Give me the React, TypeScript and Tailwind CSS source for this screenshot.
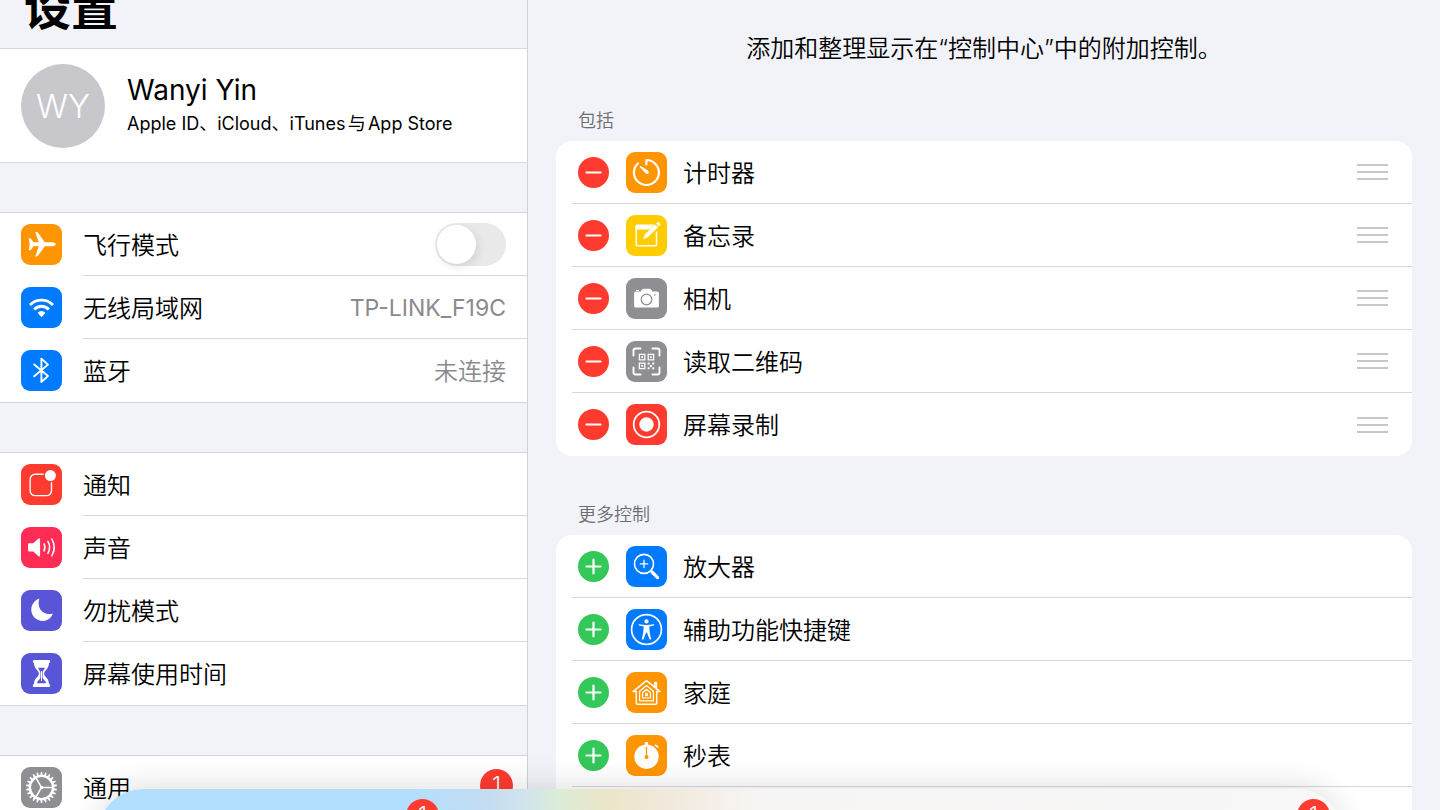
import type { ReactNode } from "react";

const GEAR_TEETH = Array.from({ length: 22 }, (_, i) => (i * 360) / 22);

function Glyph({ children }: { children: ReactNode }) {
  return (
    <svg viewBox="0 0 41 41" className="size-full" fill="none" aria-hidden="true">
      {children}
    </svg>
  );
}

const round = { strokeLinecap: "round", strokeLinejoin: "round" } as const;

const Airplane = () => (
  <Glyph>
    <path
      fill="#fff"
      d="M34.8 20.2c0 1.2-2.2 2-4 2h-7l-6.8 9.5c-.4.5-.8.8-1.4.8h-1.4l3.6-10.3h-5.3l-2.5 3.5c-.2.3-.5.5-.9.5H7.7l1-6-1-6h1.4c.4 0 .7.2.9.5l2.5 3.5h5.3L14.2 7.9h1.4c.6 0 1 .3 1.4.8l6.8 9.5h7c1.8 0 4 .8 4 2z"
    />
  </Glyph>
);

const Wifi = () => (
  <Glyph>
    <path stroke="#fff" strokeWidth="2.9" d="M9 17.9a16.2 16.2 0 0 1 23 0M13.2 22.4a10.2 10.2 0 0 1 14.6 0" />
    <path fill="#fff" d="M16.6 25.7a5.6 5.6 0 0 1 7.8 0l-3.1 3.7c-.5.5-1.1.5-1.6 0z" />
  </Glyph>
);

const Bluetooth = () => (
  <Glyph>
    <path stroke="#fff" strokeWidth="1.9" {...round} d="M13.2 14.4 27 26l-6.6 6V8.6l6.6 6-13.8 11.7" />
  </Glyph>
);

const Notifications = () => (
  <Glyph>
    <rect x="9.1" y="10.2" width="21.4" height="21.4" rx="5" stroke="#fff" strokeWidth="1.4" />
    <circle cx="29.4" cy="11.6" r="7" fill="#ff3b30" />
    <circle cx="29.4" cy="11.6" r="5.5" fill="#fff" />
  </Glyph>
);

const Sound = () => (
  <Glyph>
    <path
      fill="#fff"
      d="M8.5 16.2h3.7l5.4-4.6c.7-.6 1.5-.2 1.5.7v16.2c0 .9-.8 1.3-1.5.7l-5.4-4.6H8.5c-.9 0-1.4-.5-1.4-1.4v-5.6c0-.9.5-1.4 1.4-1.4z"
    />
    <path stroke="#fff" strokeWidth="1.5" {...round} d="M23 16.9c1.2 2.2 1.2 4.8 0 7M26.9 14.4c2.1 3.7 2.1 8.3 0 12M30.8 12c3 5.2 3 11.6 0 16.8" />
  </Glyph>
);

const Moon = () => (
  <Glyph>
    <path fill="#fff" d="M18.3 8.6c-5.3 2-8 6.6-8 11.2C10.3 26.2 15.4 31 21.6 31c4.7 0 8.7-2.9 10.2-7.5-8.6 2.6-16.6-4.2-13.5-14.9z" />
  </Glyph>
);

const Hourglass = () => (
  <Glyph>
    <path
      fill="#fff"
      d="M13.2 7h14.6c1.8 0 1.8 2.7.2 3-.2 5-3.3 7.3-4.2 8.5-.9 1.2-.9 3 0 4.2.9 1.2 4 3.5 4.2 8.2 1.6.3 1.6 3-.2 3H13.2c-1.8 0-1.8-2.7-.2-3 .2-4.7 3.3-7 4.2-8.2.9-1.2.9-3 0-4.2-.9-1.2-4-3.5-4.2-8.5-1.6-.3-1.6-3 .2-3z"
    />
    <path fill="#5856d6" d="M17 14.8h7c-.8 2-2.3 3-2.4 5v5c.2 1.6 2.5 2.7 3.2 4.2.3.8 0 1.3-.8 1.3h-7c-.8 0-1.1-.5-.8-1.3.7-1.5 3-2.6 3.2-4.2v-5c-.1-2-1.6-3-2.4-5z" />
    <path fill="#fff" d="M20 18h1v10h-1z" />
  </Glyph>
);

const Gear = () => (
  <Glyph>
    <circle cx="20.5" cy="20.5" r="11.6" stroke="#fff" strokeWidth="2.4" />
    {GEAR_TEETH.map((a) => (
      <path key={a} fill="#fff" d="M19.3 8.6 19.8 5h1.4l.5 3.6z" transform={`rotate(${a} 20.5 20.5)`} />
    ))}
    <path stroke="#fff" strokeWidth="1.5" d="M20.5 20.5h11.5M20.5 20.5l-5.8-10M20.5 20.5l-5.8 10" />
    <circle cx="20.5" cy="20.5" r="1.7" fill="#fff" />
  </Glyph>
);

const Timer = () => (
  <Glyph>
    <path stroke="#fff" strokeWidth="2.2" {...round} d="M20.4 12.5V8c6.8 0 12.5 5.6 12.5 12.5S27.3 33 20.4 33 7.9 27.4 7.9 20.5c0-3.7 1.5-6.7 4.1-9" />
    <path fill="#fff" d="M13.9 14.2c.3-.3.7-.3 1-.1l6.9 4.3c2.2 1.6.3 4.7-2 3-.3-.2-.5-.5-.7-.7L13.8 15.2c-.2-.3-.2-.7.1-1z" />
  </Glyph>
);

const Memo = () => (
  <Glyph>
    <path fill="#fff" d="M11 9.5h17.5l-4.7 5H9.5V11c0-.9.6-1.5 1.5-1.5z" />
    <path stroke="#fff" strokeWidth="1.5" d="M10.3 12v17.6c0 .8.4 1.2 1.2 1.2h17.8c.8 0 1.2-.4 1.2-1.2V16.5" />
    <path fill="#fff" d="m17 24.2 1.7-4.6 10.6-10.1 2.7 2.8-10.6 10.1zM30.2 8.6l1.2-1.1c.6-.6 1.3-.5 1.9.1l.7.8c.6.6.6 1.3 0 1.9l-1.2 1.1z" />
  </Glyph>
);

const Camera = () => (
  <Glyph>
    <path
      fill="#fff"
      d="M10 13.6h4.6l1.7-2.3c.3-.4.7-.6 1.2-.6h6c.5 0 .9.2 1.2.6l1.7 2.3H31c1.2 0 1.9.7 1.9 1.9v12.2c0 1.2-.7 1.9-1.9 1.9H10c-1.2 0-1.9-.7-1.9-1.9V15.5c0-1.2.7-1.9 1.9-1.9z"
    />
    <path fill="#fff" d="M10 12h3v1h-3z" />
    <circle cx="20.5" cy="21.5" r="5.3" stroke="#8e8e93" strokeWidth="1.2" />
    <circle cx="28.8" cy="17" r=".8" fill="#8e8e93" />
  </Glyph>
);

const QrCode = () => (
  <Glyph>
    <path stroke="#fff" strokeWidth="1.9" {...round} d="M7.5 14.5V9.5c0-1.3.6-2 2-2h5M26.5 7.5h5c1.4 0 2 .7 2 2v5M33.5 26.5v5c0 1.3-.6 2-2 2h-5M14.5 33.5h-5c-1.4 0-2-.7-2-2v-5" />
    <path stroke="#fff" strokeWidth="1.3" d="M13.4 13.4h5.4v5.4h-5.4zM22.2 13.4h5.4v5.4h-5.4zM13.4 22.2h5.4v5.4h-5.4z" />
    <path
      fill="#fff"
      d="M15.2 15.2H17V17h-1.8zM24 15.2h1.8V17H24zM15.2 24H17v1.8h-1.8zM21.6 21.6h2v2h-2zM26.2 21.6h2v2h-2zM23.9 23.9h2v2h-2zM21.6 26.2h2v2h-2zM26.2 26.2h2v2h-2z"
    />
  </Glyph>
);

const Record = () => (
  <Glyph>
    <circle cx="20.5" cy="20.5" r="12.8" stroke="#fff" strokeWidth="1.8" />
    <circle cx="20.5" cy="20.5" r="7.2" fill="#fff" />
  </Glyph>
);

const Magnifier = () => (
  <Glyph>
    <circle cx="18" cy="17.9" r="9.5" stroke="#fff" strokeWidth="1.6" />
    <path stroke="#fff" strokeWidth="1.3" strokeLinecap="round" d="M14.3 17.9h7.4M18 14.2v7.4" />
    <path stroke="#fff" strokeWidth="3.2" strokeLinecap="round" d="m26 26 5.6 5.6" />
    <path stroke="#fff" strokeWidth="1.6" d="m24.5 24.5 2 2" />
  </Glyph>
);

const Accessibility = () => (
  <Glyph>
    <circle cx="20.5" cy="20.5" r="14.9" stroke="#fff" strokeWidth="1.7" />
    <circle cx="20.5" cy="12.4" r="2.1" fill="#fff" />
    <path
      fill="#fff"
      d="M13.4 15.2c2.4.5 4.8.8 7.1.8s4.7-.3 7.1-.8c.9-.1 1.1 1.1.2 1.3-1.5.4-3 .7-4.4.9.1 4.3.3 6.5 1.7 12.2.2 1.1-1.3 1.6-1.7.5l-2.5-6.7h-.8l-2.5 6.7c-.4 1.1-1.9.6-1.7-.5 1.4-5.7 1.6-7.9 1.7-12.2-1.4-.2-2.9-.5-4.4-.9-.9-.2-.7-1.4.2-1.3z"
    />
  </Glyph>
);

const Home = () => (
  <Glyph>
    <path stroke="#fff" strokeWidth="1.5" {...round} d="M7 19.6 20.5 8.7 34 19.6h-3.3v11.6c0 .7-.3 1-1 1H11.3c-.7 0-1-.3-1-1V19.6zM28.7 14.5v-4h1.7v5.3" />
    <path stroke="#fff" strokeWidth="1.3" {...round} d="M13.6 28.8v-9.6l6.9-5.6 6.9 5.6v9.6z" />
    <path stroke="#fff" strokeWidth="1.2" {...round} d="M16.6 26v-5.5l3.9-3.1 3.9 3.1V26z" />
    <path fill="#fff" d="M19 24.2v-2.8l1.5-1.2 1.5 1.2v2.8z" />
  </Glyph>
);

const Stopwatch = () => (
  <Glyph>
    <circle cx="20.5" cy="21.7" r="12.2" fill="#fff" />
    <path fill="#fff" d="M18.9 7h3.2v4h-3.2zM29.3 9.3l3.4 2.3-.8 1.5-3.2-2.3z" />
    <path stroke="#ff9500" strokeWidth="1.3" strokeLinecap="round" d="M20.5 12.3v9.4" />
    <circle cx="20.5" cy="21.9" r="2" fill="#ff9500" />
  </Glyph>
);

type Item = { label: string; icon: ReactNode; color: string };

const included: Item[] = [
  { label: "计时器", icon: <Timer />, color: "bg-[#ff9500]" },
  { label: "备忘录", icon: <Memo />, color: "bg-[#ffcc00]" },
  { label: "相机", icon: <Camera />, color: "bg-[#8e8e93]" },
  { label: "读取二维码", icon: <QrCode />, color: "bg-[#8e8e93]" },
  { label: "屏幕录制", icon: <Record />, color: "bg-[#ff3b30]" },
];

const more: Item[] = [
  { label: "放大器", icon: <Magnifier />, color: "bg-[#007aff]" },
  { label: "辅助功能快捷键", icon: <Accessibility />, color: "bg-[#007aff]" },
  { label: "家庭", icon: <Home />, color: "bg-[#ff9500]" },
  { label: "秒表", icon: <Stopwatch />, color: "bg-[#ff9500]" },
];

function Tile({ color, children }: { color: string; children: ReactNode }) {
  return <span className={`block size-[41px] shrink-0 overflow-hidden rounded-[9px] ${color}`}>{children}</span>;
}

function Badge() {
  return (
    <span className="flex size-[33px] items-center justify-center rounded-full bg-[#ff3b30] text-[23px] leading-none text-white">
      1
    </span>
  );
}

function Group({ children }: { children: ReactNode }) {
  return <ul className="mt-[49px] border-y border-[#d3d3d8] bg-white">{children}</ul>;
}

function SettingRow({ label, icon, color, children }: Item & { children?: ReactNode }) {
  return (
    <li className="group flex h-[63px] items-center gap-[21px] pl-[21px]">
      <Tile color={color}>{icon}</Tile>
      <div className="flex h-full flex-1 items-center justify-between border-b border-[#d8d8dc] pr-[21px] group-last:border-b-0">
        {label === "飞行模式" ? (
          <label htmlFor="airplane" className="pt-[3px]">
            {label}
          </label>
        ) : (
          <a href="#" className="pt-[3px]">
            {label}
          </a>
        )}
        {children}
      </div>
    </li>
  );
}

function ControlRow({ item, kind }: { item: Item; kind: "remove" | "add" }) {
  const removing = kind === "remove";
  return (
    <li
      className={`ml-4 flex h-[63px] items-center border-b border-[#d8d8dc] pr-6 pl-[6px] ${removing ? "last:border-b-0" : ""}`}
    >
      <button
        type="button"
        aria-label={`${removing ? "移除" : "添加"}${item.label}`}
        className={`mr-[17px] size-[31px] shrink-0 rounded-full ${removing ? "bg-[#ff3b30]" : "bg-[#34c759]"}`}
      >
        <svg viewBox="0 0 31 31" className="size-full" stroke="#fff" strokeWidth="2.2" strokeLinecap="round" aria-hidden="true">
          <path d={removing ? "M8.5 15.5h14" : "M8.5 15.5h14M15.5 8.5v14"} />
        </svg>
      </button>
      <Tile color={item.color}>{item.icon}</Tile>
      <span className="ml-4 flex-1 pt-[3px]">{item.label}</span>
      {removing && (
        <button type="button" aria-label={`移动${item.label}`} className="flex w-[31px] flex-col gap-[5px]">
          <span className="h-[2px] bg-[#c8c8cb]" />
          <span className="h-[2px] bg-[#c8c8cb]" />
          <span className="h-[2px] bg-[#c8c8cb]" />
        </button>
      )}
    </li>
  );
}

export default function App() {
  return (
    <div
      lang="zh-CN"
      className="relative flex h-screen overflow-hidden bg-[#f2f3f8] font-[Inter,'Noto_Sans_CJK_SC',sans-serif] text-2xl font-[350] text-black"
    >
      <aside className="w-[528px] shrink-0 overflow-hidden border-r border-[#d0d0d6]">
        <header className="flex h-12 items-end pb-[14px] pl-6">
          <h1 className="text-[47px] leading-[52px] font-bold">设置</h1>
        </header>
        <a href="#" className="flex items-center gap-[22px] border-y border-[#d8d8dc] bg-white pt-[15px] pb-[14px] pl-[21px]">
          <span className="flex size-[84px] items-center justify-center rounded-full bg-[#c7c7cc] text-[33px] text-white">
            WY
          </span>
          <span className="flex flex-col gap-1 font-normal">
            <span className="text-[28px] leading-8">Wanyi Yin</span>
            <span className="text-lg leading-7 [text-autospace:normal]">Apple ID、iCloud、iTunes与App Store</span>
          </span>
        </a>

        <Group>
          <SettingRow label="飞行模式" icon={<Airplane />} color="bg-[#ff9500]">
            <input
              id="airplane"
              type="checkbox"
              role="switch"
              className="flex h-[43px] w-[71px] appearance-none items-center rounded-full bg-[#e9e9ea] p-[2px] before:size-[39px] before:rounded-full before:bg-white before:shadow-[2px_3px_8px_rgba(0,0,0,0.1)] checked:justify-end checked:bg-[#34c759]"
            />
          </SettingRow>
          <SettingRow label="无线局域网" icon={<Wifi />} color="bg-[#007aff]">
            <span className="pt-[3px] text-[23px] font-normal text-[#8a8a8e]">TP-LINK_F19C</span>
          </SettingRow>
          <SettingRow label="蓝牙" icon={<Bluetooth />} color="bg-[#007aff]">
            <span className="pt-[3px] text-[#8a8a8e]">未连接</span>
          </SettingRow>
        </Group>

        <Group>
          <SettingRow label="通知" icon={<Notifications />} color="bg-[#ff3b30]" />
          <SettingRow label="声音" icon={<Sound />} color="bg-[#ff2d55]" />
          <SettingRow label="勿扰模式" icon={<Moon />} color="bg-[#5856d6]" />
          <SettingRow label="屏幕使用时间" icon={<Hourglass />} color="bg-[#5856d6]" />
        </Group>

        <Group>
          <SettingRow label="通用" icon={<Gear />} color="bg-[#8e8e93]">
            <span className="-mr-[7px] pb-1">
              <Badge />
            </span>
          </SettingRow>
        </Group>
      </aside>

      <main className="min-w-0 flex-1 overflow-hidden px-7 pt-[33px]">
        <p className="text-center leading-8">添加和整理显示在“控制中心”中的附加控制。</p>
        <h2 className="mt-11 px-[22px] text-lg leading-6 text-[#6d6d72]">包括</h2>
        <ul className="mt-2 overflow-hidden rounded-2xl bg-white">
          {included.map((item) => (
            <ControlRow key={item.label} item={item} kind="remove" />
          ))}
        </ul>
        <h2 className="mt-[47px] px-[22px] text-lg leading-6 text-[#6d6d72]">更多控制</h2>
        <ul className="mt-2 overflow-hidden rounded-2xl bg-white pb-16">
          {more.map((item) => (
            <ControlRow key={item.label} item={item} kind="add" />
          ))}
        </ul>
      </main>

      <nav
        aria-label="程序坞"
        className="absolute inset-x-[98px] -bottom-[90px] flex h-[111px] justify-between rounded-[45px] bg-[linear-gradient(90deg,#b3dfff_0%,#b3dfff_25%,#c3dcf2_31%,#cfe3ee_34%,#dcecd8_37%,#ebe6c8_41%,#f1e9dc_46%,#f7f5f4_53%,#f8f8f8_100%)] pt-[10px] pr-3 pl-[308px] shadow-[0_-4px_30px_rgba(0,0,0,0.12)]"
      >
        <Badge />
        <Badge />
      </nav>
    </div>
  );
}
